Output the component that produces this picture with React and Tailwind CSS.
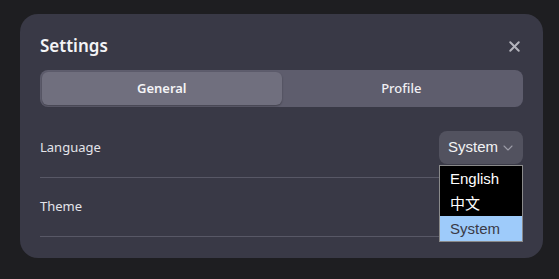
import { ChevronDown, X } from 'lucide-react';

function SelectBox({ value }) {
  return (
    <div className="flex h-[33px] w-[84px] items-center justify-between rounded-lg bg-[#52525f] pl-[9px] pr-[7px] font-['Liberation_Sans',sans-serif] text-[15px] text-[#f2f2f4]">
      <span>{value}</span>
      <ChevronDown className="h-[16px] w-[16px] text-[#9d9da8]" strokeWidth={1.6} />
    </div>
  );
}

export default function App() {
  const options = ['English', '中文', 'System'];

  return (
    <div className="h-[279px] w-full bg-[#1e1e21] pt-[14px] font-['Noto_Sans',sans-serif]">
      <div className="ml-[20px] w-[523px] rounded-[18px] bg-[#393946] px-5 pb-[21px] pt-[21px]">
        {/* Header */}
        <div className="flex items-center justify-between">
          <h1 className="text-[17px] font-semibold leading-[22px] text-[#f4f4f6]">Settings</h1>
          <button className="mr-0 text-[#b4b4bc]">
            <X className="h-[17px] w-[17px]" strokeWidth={2.8} />
          </button>
        </div>

        {/* Tabs */}
        <div className="mt-[13px] flex rounded-lg bg-[#5e5d6d] p-[2px]">
          <button className="h-[33px] flex-1 rounded-md bg-[#706f7e] text-[13px] font-semibold text-[#f4f4f6] shadow-[0_1px_2px_rgba(0,0,0,0.3)]">
            General
          </button>
          <button className="h-[33px] flex-1 rounded-md text-[13px] font-medium text-[#f0f0f4]">
            Profile
          </button>
        </div>

        {/* Rows */}
        <div className="mt-3">
          <div className="flex items-center justify-between border-b border-[#585866] pb-[13px] pt-3">
            <span className="text-[13px] text-[#e4e4ea]">Language</span>
            <div className="relative">
              <SelectBox value="System" />
              <div className="absolute left-0 top-[34px] z-10 w-[84px] border border-[#8a8a8a] bg-black font-['Liberation_Sans','Noto_Sans_CJK_SC',sans-serif] text-[15px]">
                {options.map((opt) => (
                  <div
                    key={opt}
                    className={`h-[25px] px-[10px] leading-[25px] ${
                      opt === 'System' ? 'bg-[#9ecbfa] text-[#3a3a46]' : 'text-white'
                    }`}
                  >
                    {opt}
                  </div>
                ))}
              </div>
            </div>
          </div>
          <div className="flex items-center justify-between border-b border-[#585866] pb-[13px] pt-3">
            <span className="text-[13px] text-[#e4e4ea]">Theme</span>
            <div className="h-[33px] w-[84px] rounded-lg bg-[#52525f]" />
          </div>
        </div>
      </div>
    </div>
  );
}
